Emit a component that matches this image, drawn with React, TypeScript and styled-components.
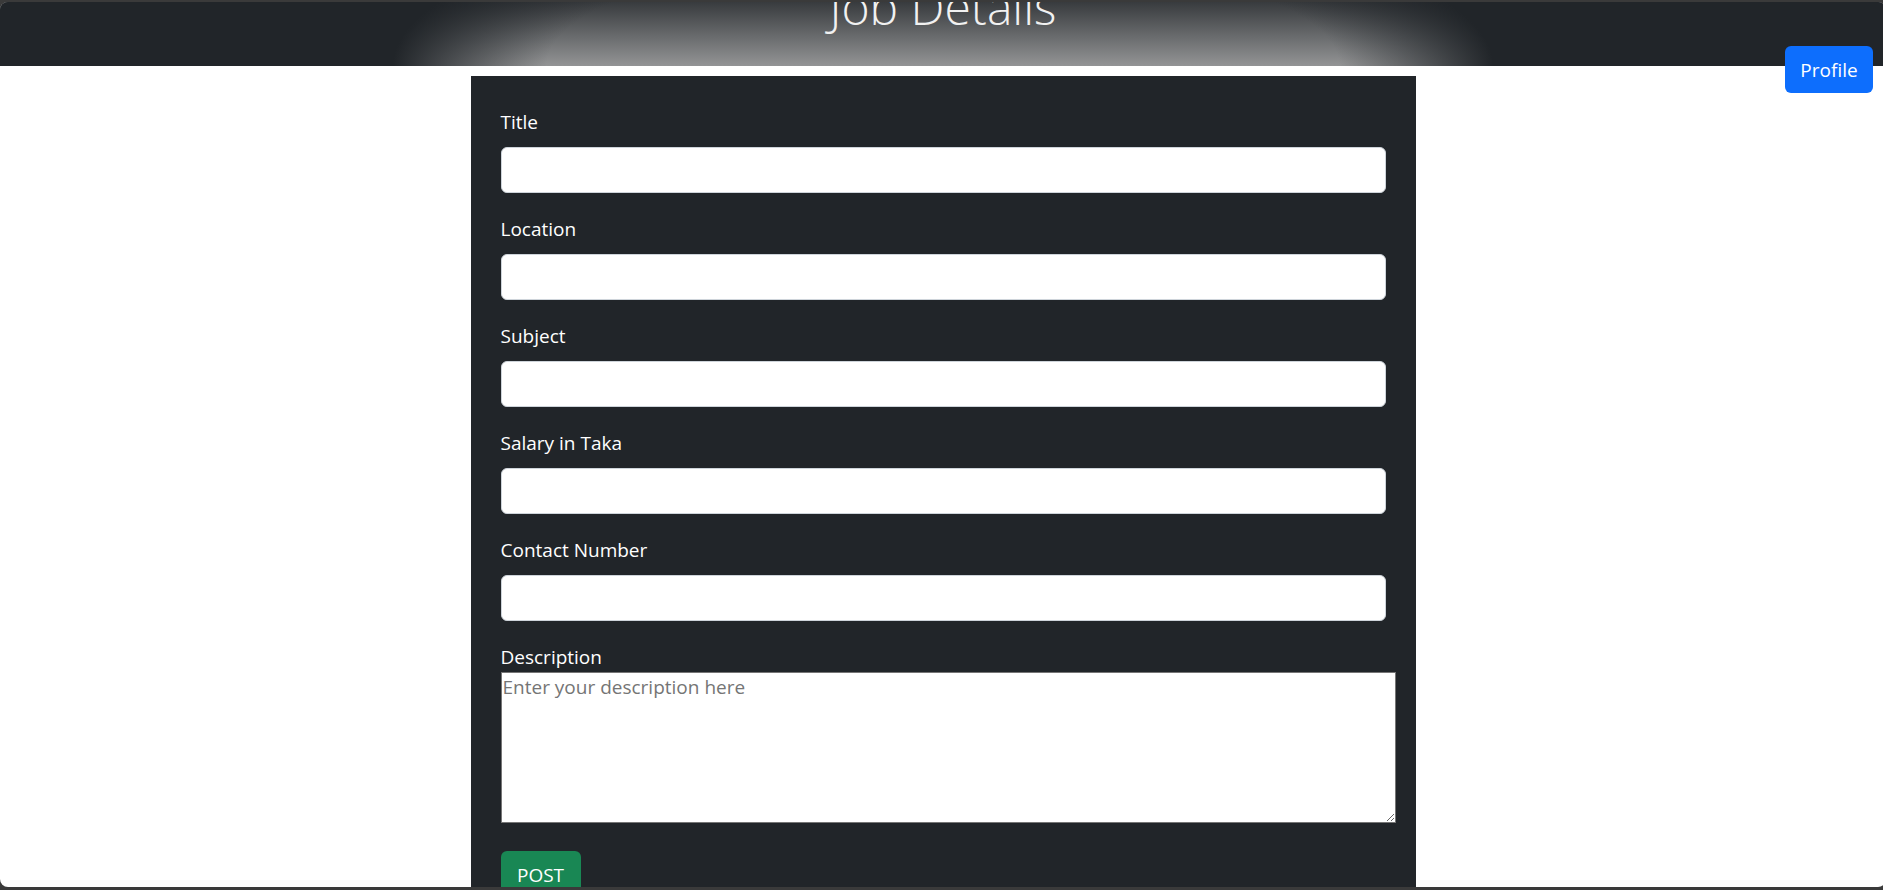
import styled, { createGlobalStyle } from "styled-components";

const GlobalStyle = createGlobalStyle`
  html, body {
    margin: 0;
    padding: 0;
    height: 100%;
    overflow: hidden;
    background: #3a3a3a;
  }
  body {
    font-family: "Open Sans", "Noto Sans", Arial, sans-serif;
  }
  * {
    box-sizing: border-box;
  }
`;

const fields = ["Title", "Location", "Subject", "Salary in Taka", "Contact Number"];

const App: React.FC = () => (
  <>
    <GlobalStyle />
    <Window>
      <Header>
        <Heading>Job Details</Heading>
      </Header>
      <ProfileButton type="button">Profile</ProfileButton>
      <Main>
        <Panel>
          {fields.map((label) => (
            <Group key={label}>
              <Label>{label}</Label>
              <Input type="text" />
            </Group>
          ))}
          <Label $tight>Description</Label>
          <TextArea placeholder="Enter your description here" />
          <PostButton type="button">POST</PostButton>
        </Panel>
      </Main>
    </Window>
  </>
);

const Window = styled.div`
  position: relative;
  width: 1886px;
  height: 885px;
  margin-top: 2px;
  background: #fff;
  border-radius: 8px;
  overflow: hidden;
`;

// dark bar with a soft grey glow rising from the bottom centre
const Header = styled.header`
  height: 64px;
  display: flex;
  justify-content: center;
  overflow: hidden;
  background:
    radial-gradient(
      ellipse 550px 160px at 50% 100%,
      rgba(33, 37, 41, 0) 72%,
      #212529 100%
    ),
    linear-gradient(to bottom, #383b3e 0%, #6a6c6e 55%, #939495 100%);
`;

const Heading = styled.h1`
  margin: -19px 0 0;
  font-size: 48px;
  font-weight: 300;
  line-height: 1;
  color: #f1f1f1;
  white-space: nowrap;
`;

const ProfileButton = styled.button`
  position: absolute;
  top: 44px;
  right: 13px;
  width: 88px;
  height: 47px;
  border: none;
  border-radius: 6px;
  background: #0d6efd;
  color: #fff;
  font-family: inherit;
  font-size: 19px;
`;

const Main = styled.main`
  display: flex;
  justify-content: center;
  padding-top: 10px;
`;

const Panel = styled.section`
  width: 945px;
  min-height: 900px;
  padding: 31px 30px;
  background: #212529;
`;

const Group = styled.div`
  margin-bottom: 21px;
`;

const Label = styled.label<{ $tight?: boolean }>`
  display: block;
  margin-bottom: ${(p) => (p.$tight ? "0" : "10px")};
  font-size: 19px;
  line-height: 30px;
  color: #fff;
`;

const Input = styled.input`
  display: block;
  width: 100%;
  height: 46px;
  padding: 7px 15px;
  border: 1px solid #ced4da;
  border-radius: 6px;
  background: #fff;
  font-family: inherit;
  font-size: 19px;
`;

const TextArea = styled.textarea`
  display: block;
  width: 895px;
  height: 151px;
  padding: 2px 1px;
  border: 1px solid #767676;
  border-radius: 0;
  background: #fff;
  font-family: inherit;
  font-size: 19px;
  line-height: 1.35;

  &::placeholder {
    color: #757575;
  }
`;

const PostButton = styled.button`
  display: block;
  margin-top: 28px;
  width: 80px;
  height: 47px;
  border: none;
  border-radius: 6px;
  background: #198754;
  color: #fff;
  font-family: inherit;
  font-size: 19px;
`;

export default App;
